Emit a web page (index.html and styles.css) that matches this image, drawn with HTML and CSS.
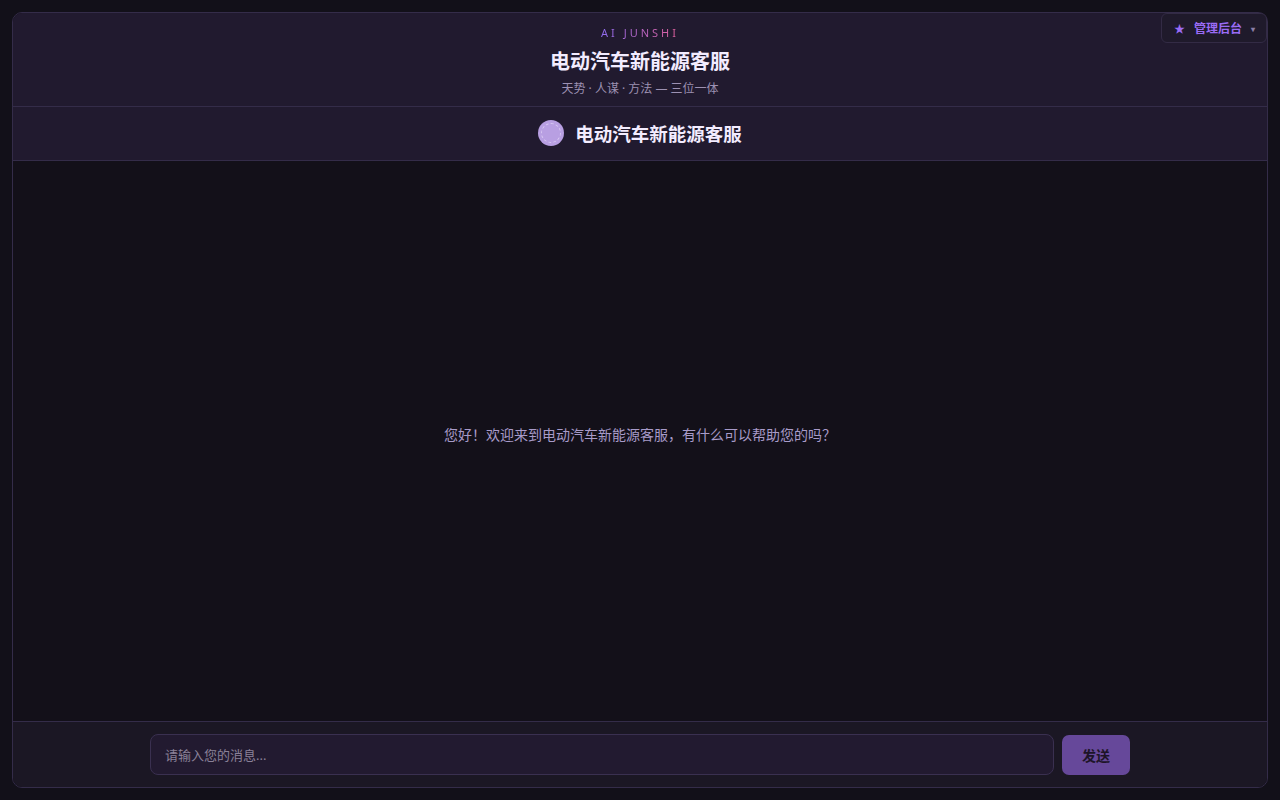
FILE: index.html
```html
<!DOCTYPE html>
<html lang="zh-CN">
<head>
    <meta charset="UTF-8">
    <title>电动汽车新能源客服</title>
    <link rel="stylesheet" href="styles.css">
</head>
<body>
<a class="admin" href="#">
    <span class="admin-star">★</span>
    <span>管理后台</span>
    <span class="admin-caret">▾</span>
</a>
<div class="app">
    <header class="top">
        <div class="brand">AI JUNSHI</div>
        <h1 class="title">电动汽车新能源客服</h1>
        <div class="motto">天势 · 人谋 · 方法 — 三位一体</div>
    </header>
    <div class="chat-head">
        <span class="avatar"><span class="avatar-ring"></span></span>
        <span class="chat-name">电动汽车新能源客服</span>
    </div>
    <main class="messages">
        <p class="welcome">您好！欢迎来到电动汽车新能源客服，有什么可以帮助您的吗？</p>
    </main>
    <footer class="composer">
        <div class="composer-row">
            <input class="msg-input" type="text" placeholder="请输入您的消息...">
            <button class="send">发送</button>
        </div>
    </footer>
</div>
</body>
</html>
```

FILE: styles.css
```css
*{
    margin: 0;
    padding: 0;
    box-sizing: border-box;
}
html,body{
    height: 100%;
}
body{
    background: #121019;
    font-family: "Noto Sans", "Noto Sans CJK SC", sans-serif;
    color: #efe7ff;
    padding: 12px;
}
.app{
    height: 100%;
    display: flex;
    flex-direction: column;
    border: 1px solid #342c49;
    border-radius: 10px;
    overflow: hidden;
    background: #131019;
}
.top{
    background: #211a2f;
    text-align: center;
    padding: 7px 0 9px;
    border-bottom: 1px solid #342c49;
}
.brand{
    font-size: 11px;
    letter-spacing: 3px;
    line-height: 14px;
    background: linear-gradient(90deg, #8f6cf0, #e0609a);
    -webkit-background-clip: text;
    background-clip: text;
    color: transparent;
    display: inline-block;
}
.title{
    font-size: 20px;
    font-weight: 700;
    line-height: 28px;
    margin-top: 6px;
    color: #f3ecff;
}
.motto{
    font-size: 12px;
    line-height: 16px;
    margin-top: 5px;
    color: #9d91b2;
}
.chat-head{
    height: 54px;
    background: #211a2f;
    border-bottom: 1px solid #342c49;
    display: flex;
    align-items: center;
    justify-content: center;
    gap: 11px;
    padding-bottom: 2px;
}
.avatar{
    width: 26px;
    height: 26px;
    border-radius: 50%;
    background: #b89fe2;
    display: flex;
    align-items: center;
    justify-content: center;
}
.avatar-ring{
    width: 20px;
    height: 20px;
    border-radius: 50%;
    border: 1px dashed #d8c8f2;
}
.chat-name{
    font-size: 18.5px;
    font-weight: 700;
    color: #f3ecff;
}
.messages{
    flex: 1;
    display: flex;
    align-items: center;
    justify-content: center;
    padding-bottom: 14px;
}
.welcome{
    font-size: 14px;
    color: #a89bc9;
}
.composer{
    background: #1b1724;
    border-top: 1px solid #342c49;
    padding: 12px 0 12px;
}
.composer-row{
    max-width: 980px;
    margin: 0 auto;
    display: flex;
    gap: 8px;
}
.msg-input{
    flex: 1;
    height: 41px;
    background: #221a30;
    border: 1px solid #3a3050;
    border-radius: 8px;
    padding: 0 14px;
    font-family: inherit;
    font-size: 13px;
    color: #efe7ff;
    outline: none;
}
.msg-input::placeholder{
    color: #8a8198;
}
.send{
    width: 68px;
    height: 40px;
    margin-top: 1px;
    background: #66489a;
    border: none;
    border-radius: 7px;
    font-family: inherit;
    font-size: 14px;
    font-weight: 700;
    color: #1d1428;
}
.admin{
    position: fixed;
    top: 13px;
    right: 13px;
    height: 30px;
    padding: 0 11px 0 12px;
    display: flex;
    align-items: center;
    gap: 9px;
    background: #1f1a2b;
    border: 1px solid #332b45;
    border-radius: 6px;
    text-decoration: none;
    font-size: 12px;
    font-weight: 700;
    color: #9a6cf5;
    z-index: 2;
}
.admin-star{
    font-size: 11px;
}
.admin-caret{
    font-size: 8px;
    color: #8a7fa6;
}
```
